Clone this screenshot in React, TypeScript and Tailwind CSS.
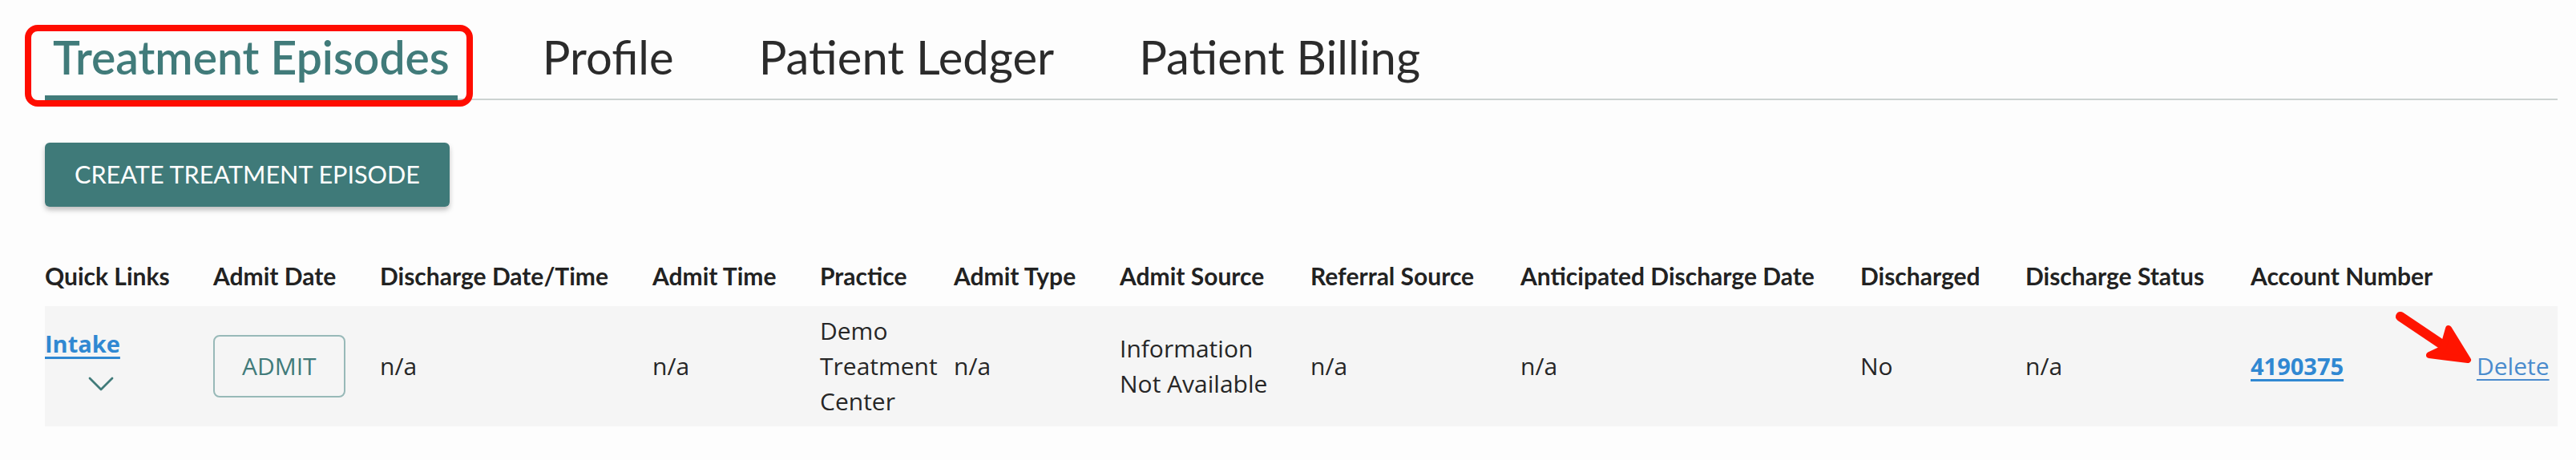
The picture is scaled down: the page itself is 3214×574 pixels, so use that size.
import React from "react";
import { ChevronDown } from "lucide-react";

type Episode = {
  practice: string;
  admitSource: string;
  discharged: string;
  accountNumber: string;
};

const columns: { label: string; width: string }[] = [
  { label: "Quick Links", width: "w-[210px]" },
  { label: "Admit Date", width: "w-[208px]" },
  { label: "Discharge Date/Time", width: "w-[340px]" },
  { label: "Admit Time", width: "w-[209px]" },
  { label: "Practice", width: "w-[167px]" },
  { label: "Admit Type", width: "w-[207px]" },
  { label: "Admit Source", width: "w-[238px]" },
  { label: "Referral Source", width: "w-[262px]" },
  { label: "Anticipated Discharge Date", width: "w-[424px]" },
  { label: "Discharged", width: "w-[206px]" },
  { label: "Discharge Status", width: "w-[281px]" },
  { label: "Account Number", width: "w-[282px]" },
  { label: "", width: "w-[101px]" },
];

const episodes: Episode[] = [
  {
    practice: "Demo Treatment Center",
    admitSource: "Information Not Available",
    discharged: "No",
    accountNumber: "4190375",
  },
];

const tabs = ["Treatment Episodes", "Profile", "Patient Ledger", "Patient Billing"];

const App: React.FC = () => {
  const cell = "py-[9px] pr-[12px] align-middle";

  return (
    <div className="relative min-h-screen bg-[#fdfdfd] pl-[56px] pr-[23px] font-['Lato',sans-serif] text-[#252525]">
      {/* tabs */}
      <div className="flex items-start gap-[106px] border-b-2 border-[#ccd3d1]">
        {tabs.map((t, i) =>
          i === 0 ? (
            <div
              key={t}
              className="relative -mb-[2px] border-b-[6px] border-[#417b7a] px-[10px] pt-[43px] pb-[19px] text-[57px] font-semibold leading-none text-[#417b7a]"
            >
              {t}
              <div className="absolute -left-[25px] -right-[19px] top-[31px] h-[102px] rounded-[16px] border-[8px] border-[#ff0d00]" />
            </div>
          ) : (
            <div
              key={t}
              className="-mx-[10px] px-[10px] pt-[42px] text-[58px] leading-none text-[#2b2b2b]"
            >
              {t}
            </div>
          )
        )}
      </div>

      <button className="mt-[53px] flex h-[80px] items-center rounded-[6px] bg-[#3f7a79] px-[37px] text-[30.6px] text-white shadow-[0_4px_6px_rgba(0,0,0,0.25)]">
        CREATE TREATMENT EPISODE
      </button>

      <table className="mt-[48px] w-[3135px] table-fixed border-collapse text-left">
        <thead>
          <tr>
            {columns.map((c, i) => (
              <th
                key={i}
                className={`${c.width} py-[16px] pr-[12px] text-[30px] font-bold leading-[44px] text-[#222]`}
              >
                {c.label}
              </th>
            ))}
          </tr>
        </thead>
        <tbody>
          {episodes.map((e) => (
            <tr
              key={e.accountNumber}
              className="bg-[#f5f5f5] font-['Open_Sans',sans-serif] text-[30px] leading-[44px] text-[#262626]"
            >
              <td className={cell}>
                <a href="#" className="text-[29px] font-bold text-[#3088d2] underline decoration-[3px] underline-offset-[5px]">
                  Intake
                </a>
                <div className="ml-[42px] text-[#417b7a]">
                  <ChevronDown size={56} strokeWidth={1.2} />
                </div>
              </td>
              <td className={cell}>
                <button className="h-[78px] rounded-[8px] border-2 border-[#98b9b8] px-[34px] text-[30px] text-[#417b7a]">
                  ADMIT
                </button>
              </td>
              <td className={cell}>n/a</td>
              <td className={cell}>n/a</td>
              <td className={cell}>{e.practice}</td>
              <td className={cell}>n/a</td>
              <td className="py-[9px] pr-[30px] align-middle">{e.admitSource}</td>
              <td className={cell}>n/a</td>
              <td className={cell}>n/a</td>
              <td className={cell}>{e.discharged}</td>
              <td className={cell}>n/a</td>
              <td className={cell}>
                <a href="#" className="text-[29px] font-bold text-[#3088d2] underline decoration-[3px] underline-offset-[5px]">
                  {e.accountNumber}
                </a>
              </td>
              <td className="py-[9px] pr-[8px] align-middle">
                <a href="#" className="text-[#4a8bcd] underline decoration-[2px] underline-offset-[5px]">
                  Delete
                </a>
              </td>
            </tr>
          ))}
        </tbody>
      </table>

      {/* annotation arrow */}
      <svg
        className="absolute left-[2980px] top-[380px]"
        width="120"
        height="90"
        viewBox="0 0 120 90"
      >
        <line x1="15" y1="15" x2="70" y2="52" stroke="#ff1400" strokeWidth="12" strokeLinecap="round" />
        <path
          d="M75 30 L99 69 L51 63 L68 55 Z"
          fill="#ff1400"
          stroke="#ff1400"
          strokeWidth="8"
          strokeLinejoin="round"
        />
      </svg>
    </div>
  );
};

export default App;
